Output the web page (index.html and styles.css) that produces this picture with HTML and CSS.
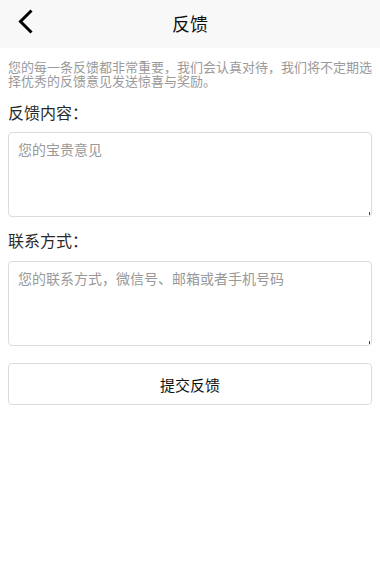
FILE: index.html
```html
<!DOCTYPE html>
<html lang="zh-CN">
<head>
<meta charset="utf-8">
<title>反馈</title>
<link rel="stylesheet" href="styles.css">
</head>
<body>
<header class="topbar">
  <a class="back" href="#" aria-label="返回">
    <svg width="16" height="26" viewBox="0 0 16 26" aria-hidden="true">
      <polyline points="13.5,1.5 2.5,12.5 13.5,23.5" fill="none" stroke="#000" stroke-width="3" stroke-linecap="butt" stroke-linejoin="miter"/>
    </svg>
  </a>
  <h1 class="title">反馈</h1>
</header>
<main class="content">
  <p class="desc">您的每一条反馈都非常重要，我们会认真对待，我们将不定期选择优秀的反馈意见发送惊喜与奖励。</p>
  <label class="label label-first" for="fb">反馈内容：</label>
  <div class="field field-first">
    <textarea id="fb" class="input" placeholder="您的宝贵意见"></textarea>
    <span class="grip"></span>
  </div>
  <label class="label label-second" for="ct">联系方式：</label>
  <div class="field field-second">
    <textarea id="ct" class="input" placeholder="您的联系方式，微信号、邮箱或者手机号码"></textarea>
    <span class="grip"></span>
  </div>
  <button class="submit" type="button">提交反馈</button>
</main>
</body>
</html>
```
FILE: styles.css
```css
* {
  box-sizing: border-box;
}
html, body {
  margin: 0;
  padding: 0;
  background: #fff;
}
body {
  font-family: "Noto Sans CJK SC", "Noto Sans", sans-serif;
  color: #333;
}
.topbar {
  position: relative;
  height: 48px;
  background: #f8f8f8;
  display: flex;
  align-items: center;
  justify-content: center;
}
.back {
  position: absolute;
  left: 18px;
  top: 9px;
  width: 16px;
  height: 26px;
  display: block;
}
.back svg {
  display: block;
}
.title {
  margin: 0;
  font-size: 18px;
  font-weight: normal;
  line-height: 24px;
  color: #111;
  position: relative;
  top: -1px;
}
.content {
  padding: 0 8px;
  display: flex;
  flex-direction: column;
}
.desc {
  margin: 12px 0 0;
  font-size: 13px;
  line-height: 14px;
  color: #9a9a9a;
}
.label {
  display: block;
  font-size: 16px;
  line-height: 20px;
  color: #2a2a2a;
}
.label-first {
  margin-top: 14px;
}
.label-second {
  margin-top: 13px;
}
.field {
  position: relative;
  height: 85px;
}
.field-first {
  margin-top: 10px;
}
.field-second {
  margin-top: 11px;
}
.input {
  display: block;
  width: 100%;
  height: 100%;
  margin: 0;
  padding: 6px 9px;
  border: 1px solid #dcdcdc;
  border-radius: 4px;
  font-family: inherit;
  font-size: 14px;
  line-height: 20px;
  color: #333;
  background: #fff;
  resize: none;
  outline: none;
}
.input::placeholder {
  color: #999;
}
.grip {
  position: absolute;
  right: 2px;
  bottom: 2px;
  width: 1px;
  height: 3px;
  background: #444;
}
.submit {
  margin-top: 17px;
  height: 42px;
  width: 100%;
  border: 1px solid #dcdcdc;
  border-radius: 4px;
  background: #fff;
  font-family: inherit;
  font-size: 15px;
  color: #111;
  padding: 0;
}
```
